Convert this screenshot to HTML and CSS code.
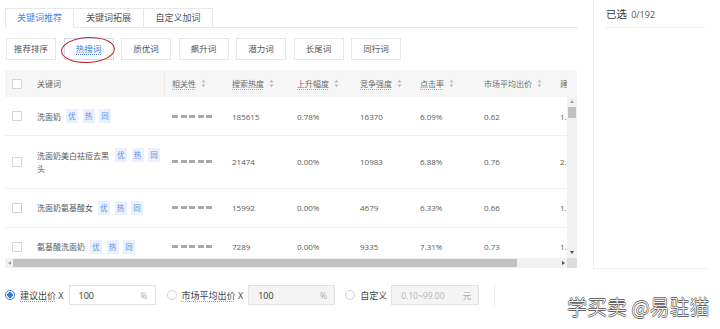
FILE: index.html
```html
<!DOCTYPE html>
<html lang="zh-CN">
<head>
<meta charset="utf-8">
<title>关键词推荐</title>
<link rel="stylesheet" href="styles.css">
</head>
<body>
<div class="page">
  <div class="top">
    <div class="main">
      <div class="tabs">
        <div class="tab t1 active">关键词推荐</div>
        <div class="tab t2">关键词拓展</div>
        <div class="tab t3">自定义加词</div>
      </div>
      <div class="filters">
        <span class="fbtn">推荐排序</span>
        <span class="fbtn active"><span class="ul">热搜词</span><span class="circle"></span></span>
        <span class="fbtn">质优词</span>
        <span class="fbtn">飙升词</span>
        <span class="fbtn">潜力词</span>
        <span class="fbtn">长尾词</span>
        <span class="fbtn">同行词</span>
      </div>
      <div class="grid">
        <div class="head">
          <div class="head-clip">
            <div class="cols head-row">
              <div class="c cb"><span class="box"></span></div>
              <div class="c kw-h">关键词</div>
              <div class="c"><span class="dot">相关性</span><svg class="sort" viewBox="0 0 5 9" width="5" height="9"><path d="M2.5 0.5 L4.5 3.5 L0.5 3.5 Z M2.5 8.5 L4.5 5.5 L0.5 5.5 Z"/></svg></div>
              <div class="c"><span class="dot">搜索热度</span><svg class="sort" viewBox="0 0 5 9" width="5" height="9"><path d="M2.5 0.5 L4.5 3.5 L0.5 3.5 Z M2.5 8.5 L4.5 5.5 L0.5 5.5 Z"/></svg></div>
              <div class="c"><span class="dot">上升幅度</span><svg class="sort" viewBox="0 0 5 9" width="5" height="9"><path d="M2.5 0.5 L4.5 3.5 L0.5 3.5 Z M2.5 8.5 L4.5 5.5 L0.5 5.5 Z"/></svg></div>
              <div class="c"><span class="dot">竞争强度</span><svg class="sort" viewBox="0 0 5 9" width="5" height="9"><path d="M2.5 0.5 L4.5 3.5 L0.5 3.5 Z M2.5 8.5 L4.5 5.5 L0.5 5.5 Z"/></svg></div>
              <div class="c"><span class="dot">点击率</span><svg class="sort" viewBox="0 0 5 9" width="5" height="9"><path d="M2.5 0.5 L4.5 3.5 L0.5 3.5 Z M2.5 8.5 L4.5 5.5 L0.5 5.5 Z"/></svg></div>
              <div class="c"><span>市场平均出价</span><svg class="sort" viewBox="0 0 5 9" width="5" height="9"><path d="M2.5 0.5 L4.5 3.5 L0.5 3.5 Z M2.5 8.5 L4.5 5.5 L0.5 5.5 Z"/></svg></div>
              <div class="c">建议出价</div>
            </div>
          </div>
        </div>
        <div class="body">
          <div class="viewport">
            <div class="cols row">
              <div class="c cb"><span class="box"></span></div>
              <div class="c kw"><span class="kt">洗面奶</span><span class="tags"><i>优</i><i>热</i><i>同</i></span></div>
              <div class="c"><span class="rel"><b></b><b></b><b></b><b></b><b></b></span></div>
              <div class="c">185615</div>
              <div class="c">0.78%</div>
              <div class="c">16370</div>
              <div class="c">6.09%</div>
              <div class="c">0.62</div>
              <div class="c">1.45</div>
            </div>
            <div class="cols row">
              <div class="c cb"><span class="box"></span></div>
              <div class="c kw"><span class="kt">洗面奶美白祛痘去黑头</span><span class="tags"><i>优</i><i>热</i><i>同</i></span></div>
              <div class="c"><span class="rel"><b></b><b></b><b></b><b></b><b></b></span></div>
              <div class="c">21474</div>
              <div class="c">0.00%</div>
              <div class="c">10983</div>
              <div class="c">6.88%</div>
              <div class="c">0.76</div>
              <div class="c">2.00</div>
            </div>
            <div class="cols row">
              <div class="c cb"><span class="box"></span></div>
              <div class="c kw"><span class="kt">洗面奶氨基酸女</span><span class="tags"><i>优</i><i>热</i><i>同</i></span></div>
              <div class="c"><span class="rel"><b></b><b></b><b></b><b></b><b></b></span></div>
              <div class="c">15992</div>
              <div class="c">0.00%</div>
              <div class="c">4679</div>
              <div class="c">6.33%</div>
              <div class="c">0.66</div>
              <div class="c">1.20</div>
            </div>
            <div class="cols row">
              <div class="c cb"><span class="box"></span></div>
              <div class="c kw"><span class="kt">氨基酸洗面奶</span><span class="tags"><i>优</i><i>热</i><i>同</i></span></div>
              <div class="c"><span class="rel"><b></b><b></b><b></b><b></b><b></b></span></div>
              <div class="c">7289</div>
              <div class="c">0.00%</div>
              <div class="c">9335</div>
              <div class="c">7.31%</div>
              <div class="c">0.73</div>
              <div class="c">1.22</div>
            </div>
          </div>
          <div class="vscroll">
            <span class="arr up"></span>
            <span class="vthumb"></span>
            <span class="arr down"></span>
          </div>
        </div>
        <div class="hscroll">
          <div class="htrack">
            <span class="arr left"></span>
            <span class="hthumb"></span>
            <span class="arr right"></span>
          </div>
          <div class="corner"></div>
        </div>
      </div>
    </div>
    <div class="side">
      <div class="side-head"><span class="sel">已选</span> <span class="cnt">0/192</span></div>
    </div>
  </div>
  <div class="bidbar">
    <span class="radio on"></span>
    <span class="lbl"><span class="dot">建议出价</span> X</span>
    <span class="inp"><span class="val">100</span><span class="unit">%</span></span>
    <span class="radio r2"></span>
    <span class="lbl"><span class="dot">市场平均出价</span> X</span>
    <span class="inp dis"><span class="val">100</span><span class="unit">%</span></span>
    <span class="radio r3"></span>
    <span class="lbl">自定义</span>
    <span class="inp dis i3"><span class="ph">0.10~99.00</span><span class="unit">元</span></span>
    <span class="vdiv"></span>
  </div>
  <div class="watermark">学买卖 @易驻猫</div>
</div>
</body>
</html>
```

FILE: styles.css
```css
* { box-sizing: border-box; }
body {
  margin: 0;
  background: #fff;
  color: #555;
  font-family: "Open Sans", "Noto Sans CJK SC", sans-serif;
}
.page {
  position: relative;
  width: 720px;
  height: 329px;
  overflow: hidden;
}
.top {
  display: flex;
  height: 269px;
}
.main {
  width: 593px;
  padding-left: 5px;
}
/* tabs */
.tabs {
  margin-top: 8px;
  width: 573px;
  height: 20px;
  display: flex;
  border-bottom: 1px solid #e8e8e8;
}
.tab {
  height: 20px;
  border: 1px solid #e8e8e8;
  margin-right: -1px;
  font-size: 9px;
  line-height: 18px;
  text-align: center;
  color: #555;
  background: #fff;
}
.tab.active { color: #4a86e8; border-bottom-color: #fff; }
.t1 { width: 69px; }
.t2 { width: 71px; }
.t3 { width: 70px; }
/* filters */
.filters {
  margin-top: 10px;
  margin-left: 1px;
  display: flex;
  gap: 7.5px;
}
.fbtn {
  position: relative;
  width: 50px;
  height: 22px;
  border: 1px solid #e6e6e6;
  font-size: 8.5px;
  line-height: 20px;
  text-align: center;
  color: #555;
}
.fbtn.active { border-color: #cfdcee; color: #3a7bd5; }
.fbtn .ul { border-bottom: 1px dotted #3a7bd5; }
.circle {
  position: absolute;
  left: -4px;
  top: -2px;
  width: 54px;
  height: 26px;
  border: 1.4px solid #c4262e;
  border-radius: 50%;
  transform: rotate(-3deg);
}
/* grid */
.grid {
  margin-top: 10px;
  width: 572px;
}
.head {
  height: 27px;
  background: #f6f6f6;
}
.head-clip {
  width: 562px;
  height: 27px;
  overflow: hidden;
}
.cols {
  display: grid;
  grid-template-columns: 25px 135px 60px 65px 63px 60px 64px 76px 80px;
  width: 628px;
}
.c {
  padding-left: 7px;
  display: flex;
  align-items: center;
  white-space: nowrap;
}
.head-row .c {
  height: 27px;
  font-size: 8px;
  color: #6a6a6a;
}
.head-row .kw-h { border-right: 1px solid #ececec; }
.dot {
  text-decoration: underline dotted #aaa;
  text-underline-offset: 2px;
}
.sort { margin-left: 5px; fill: #bdbdbd; }
.box {
  width: 10px;
  height: 10px;
  border: 1px solid #d6d6d6;
  background: #fff;
}
.body {
  display: flex;
  height: 161px;
}
.viewport {
  width: 562px;
  overflow: hidden;
}
.row {
  padding: 12px 0;
  border-bottom: 1px solid #eeeeee;
  align-items: center;
  font-size: 8px;
  color: #5a5a5a;
}
.row .c { min-height: 14px; }
.row .kw {
  align-items: flex-start;
  gap: 5px;
  padding-right: 5px;
  white-space: normal;
}
.kt {
  line-height: 13.5px;
  padding-top: 0.5px;
  flex: 0 1 auto;
}
.tags {
  display: flex;
  gap: 4.5px;
  flex: none;
}
.tags i {
  font-style: normal;
  width: 12px;
  height: 14px;
  line-height: 14px;
  text-align: center;
  background: #eaf1fd;
  color: #5b8ee6;
  font-size: 7.5px;
}
.rel { display: flex; gap: 2.5px; }
.rel b {
  width: 6px;
  height: 3px;
  background: #a9a9a9;
}
.vscroll {
  position: relative;
  width: 10px;
  background: #f1f1f1;
}
.arr {
  position: absolute;
  width: 0;
  height: 0;
  border-style: solid;
  border-color: transparent;
}
.arr.up { left: 3px; top: 3px; border-width: 0 2px 3px 2px; border-bottom-color: #a3a3a3; }
.arr.down { left: 3px; top: 154px; border-width: 3px 2px 0 2px; border-top-color: #505050; }
.vthumb {
  position: absolute;
  left: 1px;
  top: 10px;
  width: 8px;
  height: 11px;
  background: #c1c1c1;
}
.hscroll {
  display: flex;
  height: 10px;
}
.htrack {
  position: relative;
  width: 562px;
  background: #f1f1f1;
}
.arr.left { left: 3px; top: 3px; border-width: 2px 3px 2px 0; border-right-color: #a3a3a3; }
.arr.right { left: 557px; top: 3px; border-width: 2px 0 2px 3px; border-left-color: #505050; }
.hthumb {
  position: absolute;
  left: 8px;
  top: 1px;
  width: 504px;
  height: 8px;
  background: #c1c1c1;
}
.corner { width: 10px; background: #dcdcdc; }
/* side */
.side {
  width: 115px;
  height: 269px;
  border-left: 1px solid #eeeeee;
  border-bottom: 1px solid #eeeeee;
}
.side-head {
  margin: 4px 3px 0 12px;
  height: 24px;
  border-bottom: 1px solid #eeeeee;
  line-height: 16px;
  white-space: nowrap;
}
.sel { font-size: 10.5px; color: #333; }
.cnt { font-size: 9px; color: #555; }
/* bid bar */
.bidbar {
  margin-top: 16px;
  padding-left: 5px;
  height: 20px;
  display: flex;
  align-items: center;
  font-size: 9px;
  color: #444;
}
.radio {
  width: 10px;
  height: 10px;
  border-radius: 50%;
  border: 1px solid #d0d0d0;
  background: #fff;
  flex: none;
}
.radio.on {
  border-color: #3a7bd5;
  background: radial-gradient(circle, #3a7bd5 0 2.6px, #fff 3px);
}
.r2 { margin-left: 11px; }
.r3 { margin-left: 10px; }
.lbl { margin-left: 5px; white-space: nowrap; }
.inp {
  margin-left: 5px;
  width: 87px;
  height: 20px;
  border: 1px solid #e2e2e2;
  background: #fff;
  display: flex;
  align-items: center;
  justify-content: space-between;
  padding: 0 7px 0 9px;
  flex: none;
}
.inp.dis { background: #f4f4f4; }
.inp.i3 { margin-left: 4px; width: 88px; }
.val { font-size: 9px; color: #333; }
.unit { font-size: 8.5px; color: #aaa; }
.ph { font-size: 8.5px; color: #b5b5b5; }
.vdiv {
  margin-left: 15px;
  width: 1px;
  height: 22px;
  background: #f0f0f0;
}
.watermark {
  position: absolute;
  left: 567px;
  top: 295px;
  font-size: 20px;
  line-height: 24px;
  white-space: nowrap;
  color: #fafafa;
  font-family: "Noto Sans CJK SC", sans-serif;
  font-weight: 300;
  text-shadow: -0.7px 0 #666, 0.7px 0 #666, 0 -0.7px #666, 0 0.7px #666;
}
```
